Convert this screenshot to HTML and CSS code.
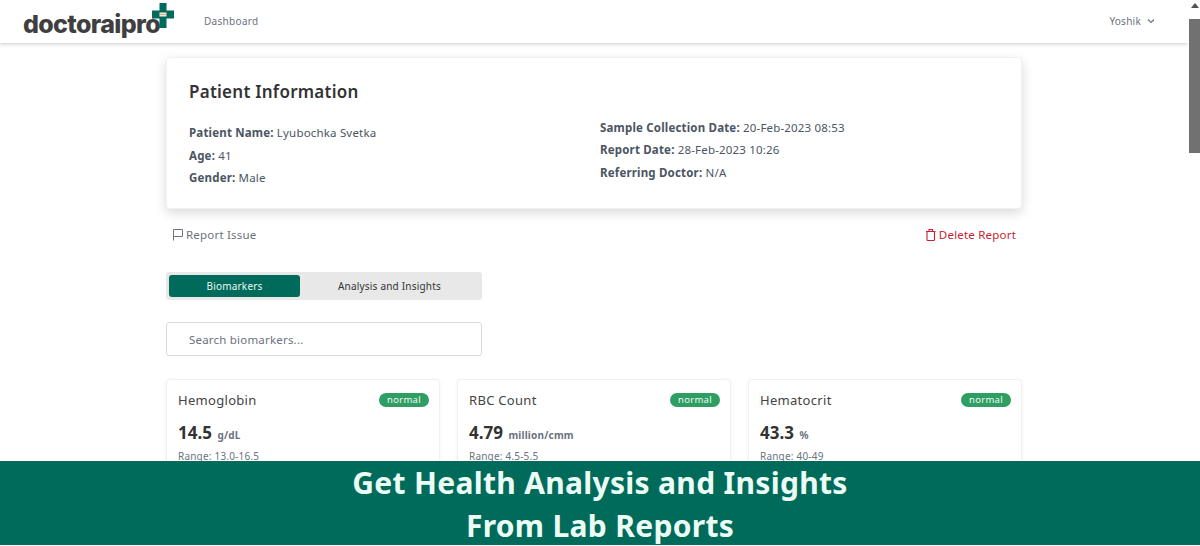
FILE: index.html
```html
<!DOCTYPE html>
<html lang="en">
<head>
<meta charset="utf-8">
<title>Report</title>
<link rel="stylesheet" href="styles.css">
</head>
<body>
<div class="page">
  <header class="nav">
    <div class="brand">
      <span class="wordmark">doctoraipro</span>
      <svg class="cross" width="22" height="25" viewBox="0 0 22 25">
        <path fill="#006b5b" d="M7.500 0H14.500V7.500H22V15.500H14.500V25H7.500V15.500H0V7.500H7.500Z"/>
        <rect x="7.500" y="9.500" width="7" height="4" fill="#f4ead8"/>
        <path d="M8.500 11.500H13.500" stroke="#c8622a" stroke-width="1.200" stroke-dasharray="1 1"/>
      </svg>
    </div>
    <a class="nav-link">Dashboard</a>
    <div class="user">Yoshik
      <svg width="8" height="6" viewBox="0 0 8 6"><path d="M1 1.500L4 4.500L7 1.500" fill="none" stroke="#6b7280" stroke-width="1.200"/></svg>
    </div>
  </header>
  <main class="main">
    <section class="info-card">
      <h2 class="info-title">Patient Information</h2>
      <div class="info-grid">
        <div class="info-col info-left">
          <p><b>Patient Name:</b> Lyubochka Svetka</p>
          <p><b>Age:</b> 41</p>
          <p><b>Gender:</b> Male</p>
        </div>
        <div class="info-col info-right">
          <p><b>Sample Collection Date:</b> 20-Feb-2023 08:53</p>
          <p><b>Report Date:</b> 28-Feb-2023 10:26</p>
          <p><b>Referring Doctor:</b> N/A</p>
        </div>
      </div>
    </section>
    <div class="actions">
      <a class="action report">
        <svg width="12" height="13" viewBox="0 0 12 13"><path d="M1.500 12.500V1.500H10.500L10.500 8.500H1.500" fill="none" stroke="#6b7280" stroke-width="1"/></svg>
        Report Issue
      </a>
      <a class="action delete">
        <svg width="11" height="13" viewBox="0 0 11 13"><path d="M2 3.500H9.500V11.500Q9.500 12.500 8.500 12.500H3Q2 12.500 2 11.500ZM1 3.500H10.500M4 3.500V1.500H7.500V3.500" fill="none" stroke="#c81e2e" stroke-width="1.100"/></svg>
        Delete Report
      </a>
    </div>
    <div class="tabs">
      <button class="tab tab-active">Biomarkers</button>
      <button class="tab">Analysis and Insights</button>
    </div>
    <div class="search">Search biomarkers...</div>
    <div class="cards">
      <article class="card">
        <div class="card-head"><h3>Hemoglobin</h3><span class="badge">normal</span></div>
        <div class="value">14.5 <small>g/dL</small></div>
        <div class="range">Range: 13.0-16.5</div>
      </article>
      <article class="card">
        <div class="card-head"><h3>RBC Count</h3><span class="badge">normal</span></div>
        <div class="value">4.79 <small>million/cmm</small></div>
        <div class="range">Range: 4.5-5.5</div>
      </article>
      <article class="card">
        <div class="card-head"><h3>Hematocrit</h3><span class="badge">normal</span></div>
        <div class="value">43.3 <small>%</small></div>
        <div class="range">Range: 40-49</div>
      </article>
    </div>
  </main>
  <div class="scrollbar">
    <svg class="arrow" width="8" height="5" viewBox="0 0 8 5"><path d="M4 0L8 5H0Z" fill="#505050"/></svg>
    <div class="thumb"></div>
  </div>
  <div class="banner">Get Health Analysis and Insights<br>From Lab Reports</div>
</div>
</body>
</html>
```

FILE: styles.css
```css
* { box-sizing: border-box; }
html, body { margin: 0; padding: 0; }
body {
  width: 1200px;
  height: 546px;
  overflow: hidden;
  background: #fff;
  font-family: "Noto Sans", sans-serif;
  color: #4b5563;
}
.page { position: relative; width: 1200px; height: 546px; overflow: hidden; padding-right: 12px; }
.nav {
  display: flex;
  align-items: center;
  height: 43px;
  padding-left: 23px;
  background: #fff;
  box-shadow: 0 1px 4px rgba(0,0,0,.22);
  position: relative;
}
.brand { display: flex; align-items: flex-start; width: 181px; height: 43px; }
.wordmark {
  font-family: Inter, sans-serif;
  font-weight: 800;
  font-size: 25px;
  letter-spacing: -.65px;
  color: #3f3f3f;
  line-height: 1;
  margin-top: 12px;
}
.cross { margin-top: 3px; margin-left: -8px; }
.nav-link { font-size: 10px; letter-spacing: .3px; color: #6b7280; margin-top: -2px; }
.user { margin-left: auto; margin-right: 33px; font-size: 10px; letter-spacing: .25px; color: #6b7280; display: flex; align-items: center; gap: 6px; margin-top: -2px; }
.main { width: 856px; margin: 14px auto 0; }
.info-card {
  height: 152px;
  background: #fff;
  border-radius: 4px;
  border: 1px solid #f1f2f3;
  padding: 22px 22px 0;
  box-shadow: 0 4px 12px rgba(0,0,0,.15);
}
.info-title { margin: 0; font-size: 17px; line-height: 24px; font-weight: 600; letter-spacing: .25px; color: #333; }
.info-grid { display: grid; grid-template-columns: 411px 1fr; }
.info-col p { margin: 0 0 6.500px; font-size: 11.500px; line-height: 16px; letter-spacing: .18px; color: #4b5563; }
.info-col b { font-weight: 700; }
.info-left { padding-top: 21px; }
.info-right { padding-top: 15.500px; }
.actions { display: flex; justify-content: space-between; padding: 17px 6px 0; height: 63px; }
.action { display: flex; align-items: center; height: 16px; gap: 2px; font-size: 11.500px; letter-spacing: .2px; }
.report { color: #6b7280; }
.delete { color: #c81e2e; gap: 3px; }
.tabs {
  display: flex;
  width: 316px;
  height: 28px;
  padding: 3px;
  background: #e8e8e8;
  border-radius: 3px;
}
.tab {
  flex: 1;
  border: 0;
  background: none;
  padding: 0;
  border-radius: 3px;
  font: 10px "Noto Sans", sans-serif;
  letter-spacing: .2px;
  color: #333;
}
.tab-active { flex: 0 0 131px; background: #006b5b; color: #e8f8f2; }
.search {
  width: 316px;
  height: 34px;
  margin-top: 22px;
  padding-left: 22px;
  border: 1px solid #d9dadc;
  border-radius: 3px;
  font-size: 11.500px;
  line-height: 33px;
  letter-spacing: .2px;
  color: #6b7280;
}
.cards { display: grid; grid-template-columns: repeat(3, 274px); gap: 17px; margin-top: 23px; }
.card {
  height: 110px;
  border: 1px solid #f0f0f1;
  border-radius: 4px;
  padding: 11px 10px 11px 11px;
  background: #fff;
  box-shadow: 0 1px 4px rgba(0,0,0,.05);
}
.card-head { display: flex; justify-content: space-between; align-items: center; height: 18px; }
.card-head h3 { margin: 0; font-size: 13px; font-weight: 400; letter-spacing: .3px; color: #444; }
.badge {
  background: #2f9e63;
  color: #eefaf3;
  font-size: 9.500px;
  letter-spacing: .3px;
  line-height: 14px;
  padding: 0 8px;
  border-radius: 8px;
}
.value { margin-top: 12px; font-size: 17px; line-height: 24px; font-weight: 700; color: #333; }
.value small { font-size: 10px; color: #6b7280; margin-left: 1px; letter-spacing: .2px; }
.range { margin-top: 2px; font-size: 10px; line-height: 14px; letter-spacing: .2px; color: #6b7280; }
.scrollbar { position: absolute; top: 0; right: 0; width: 12px; height: 546px; background: #fff; }
.arrow { display: block; position: absolute; top: 3px; left: 3px; }
.thumb { position: absolute; top: 19px; left: 1px; width: 11px; height: 134px; background: #717171; }
.banner {
  position: absolute;
  left: 0;
  top: 461px;
  width: 1200px;
  height: 84px;
  background: #006b5b;
  color: #ecfdf5;
  text-align: center;
  font-size: 30px;
  font-weight: 700;
  line-height: 43px;
  letter-spacing: .3px;
}
```
